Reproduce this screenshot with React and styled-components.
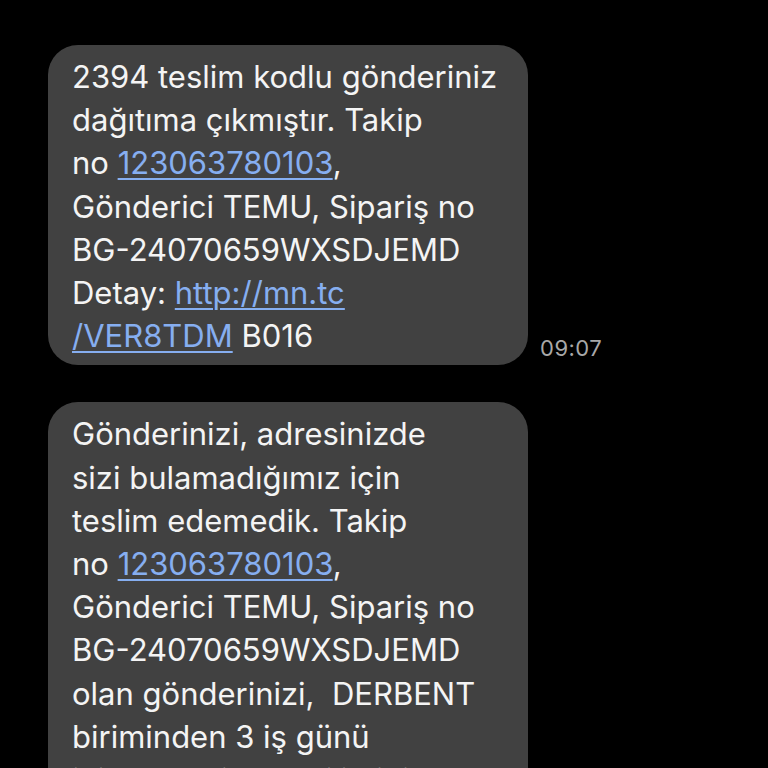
import React from "react";
import styled, { createGlobalStyle } from "styled-components";

const Global = createGlobalStyle`
  html, body { margin: 0; padding: 0; background: #000; }
  body { font-family: Inter, "Noto Sans", Roboto, "Liberation Sans", sans-serif; overflow: hidden; }
`;

const Screen = styled.div`
  width: 768px;
  height: 768px;
  background: #000;
  overflow: hidden;
  display: flex;
  flex-direction: column;
  gap: 37px;
  padding: 45px 0 0 48px;
  box-sizing: border-box;
`;

const Row = styled.div`
  display: flex;
  align-items: flex-end;
  gap: 12px;
`;

const Bubble = styled.div`
  width: 480px;
  box-sizing: border-box;
  background: #414141;
  border-radius: 30px;
  padding: 10px 24px 8px 24px;
  color: #f4f4f4;
  font-size: 31px;
  line-height: 43.2px;
  white-space: nowrap;
  flex-shrink: 0;
`;

const Link = styled.span`
  color: #86aef0;
  text-decoration: underline;
  text-decoration-thickness: 2px;
  text-underline-offset: 4px;
`;

const Time = styled.span`
  color: #a8a8a8;
  font-size: 22px;
  line-height: 1;
  letter-spacing: 0.5px;
  padding-bottom: 6px;
`;

export default function App() {
  return (
    <>
      <Global />
      <Screen>
        <Row>
          <Bubble>
            2394 teslim kodlu gönderiniz<br />
            dağıtıma çıkmıştır. Takip<br />
            no <Link>123063780103</Link>,<br />
            Gönderici TEMU, Sipariş no<br />
            BG-24070659WXSDJEMD<br />
            Detay: <Link>http://mn.tc</Link><br />
            <Link>/VER8TDM</Link> B016
          </Bubble>
          <Time>09:07</Time>
        </Row>
        <Row>
          <Bubble>
            Gönderinizi, adresinizde<br />
            sizi bulamadığımız için<br />
            teslim edemedik. Takip<br />
            no <Link>123063780103</Link>,<br />
            Gönderici TEMU, Sipariş no<br />
            BG-24070659WXSDJEMD<br />
            olan gönderinizi,&nbsp; DERBENT<br />
            biriminden 3 iş günü<br />
            içinde teslim alabilirsiniz.
          </Bubble>
        </Row>
      </Screen>
    </>
  );
}
